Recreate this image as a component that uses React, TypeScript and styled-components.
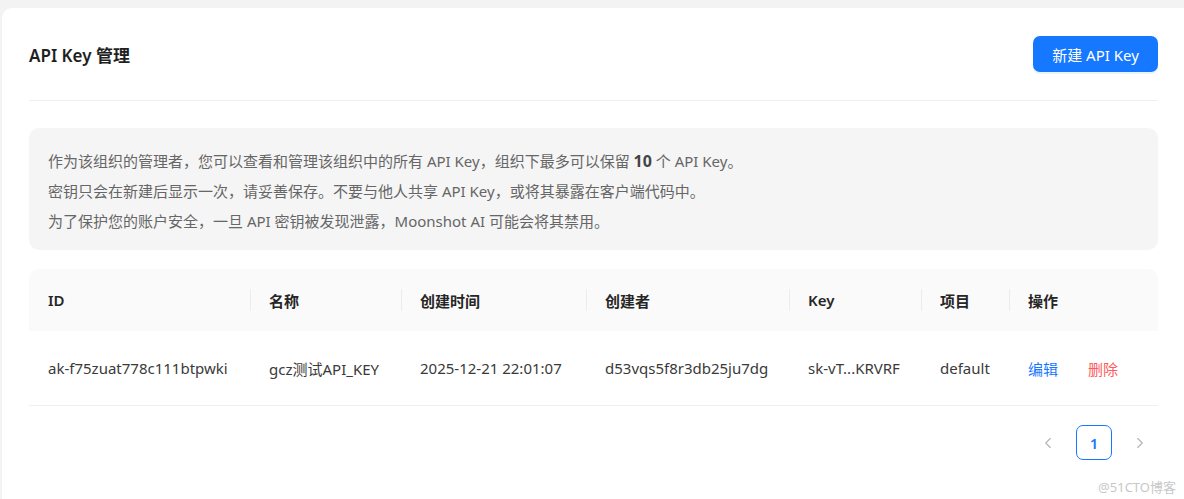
import styled, { createGlobalStyle } from "styled-components";
import { ChevronLeft, ChevronRight } from "lucide-react";

const GlobalStyle = createGlobalStyle`
  html, body {
    margin: 0;
    padding: 0;
    background: #f3f3f3;
  }
  body {
    font-family: "Noto Sans", "Noto Sans CJK SC", sans-serif;
    color: #333;
  }
`;

type Row = {
  id: string;
  name: string;
  createdAt: string;
  creator: string;
  key: string;
  project: string;
};

const rows: Row[] = [
  {
    id: "ak-f75zuat778c111btpwki",
    name: "gcz测试API_KEY",
    createdAt: "2025-12-21 22:01:07",
    creator: "d53vqs5f8r3db25ju7dg",
    key: "sk-vT...KRVRF",
    project: "default",
  },
];

const columns = ["ID", "名称", "创建时间", "创建者", "Key", "项目", "操作"];

const Page = styled.div`
  position: relative;
  height: 499px;
  padding: 8px 0 0 2px;
  box-sizing: border-box;
  overflow: hidden;
`;

const Card = styled.div`
  background: #fff;
  border-radius: 10px 0 0 0;
  padding: 0 26px 0 27px;
  height: 100%;
`;

const Header = styled.div`
  display: flex;
  align-items: center;
  justify-content: space-between;
  padding: 28px 0 28px;
  border-bottom: 1px solid #f0f0f0;
`;

const Title = styled.h1`
  margin: 0;
  font-size: 17px;
  font-weight: 600;
  color: #1f1f1f;
`;

const PrimaryButton = styled.button`
  height: 36px;
  width: 125px;
  border: none;
  border-radius: 7px;
  background: #1677ff;
  color: #fff;
  font-family: inherit;
  font-size: 15px;
  cursor: pointer;
  box-shadow: 0 2px 0 rgba(5, 145, 255, 0.1);
`;

const Notice = styled.div`
  margin-top: 27px;
  background: #f5f5f5;
  border-radius: 10px;
  padding: 18px 19px 14px;
  font-size: 15px;
  line-height: 30px;
  color: #666;

  b {
    color: #444;
    font-weight: 700;
    font-size: 16px;
  }
`;

const Table = styled.div`
  margin-top: 19px;
  display: grid;
  grid-template-columns: 221px 151px 185px 203px 132px 88px 1fr;
`;

const HeadCell = styled.div<{ $first?: boolean; $last?: boolean; $sep?: boolean }>`
  position: relative;
  height: 62px;
  display: flex;
  align-items: center;
  padding-left: 19px;
  background: #fafafa;
  font-size: 15px;
  font-weight: 600;
  color: #262626;
  border-top-left-radius: ${(p) => (p.$first ? "10px" : "0")};
  border-top-right-radius: ${(p) => (p.$last ? "10px" : "0")};

  &::before {
    content: "";
    display: ${(p) => (p.$sep ? "block" : "none")};
    position: absolute;
    left: 0;
    top: 50%;
    width: 1px;
    height: 22px;
    transform: translateY(-50%);
    background: #ececec;
  }
`;

const Cell = styled.div`
  height: 74px;
  display: flex;
  align-items: center;
  padding-left: 19px;
  font-size: 15px;
  color: #3a3a3a;
  border-bottom: 1px solid #f0f0f0;
  white-space: nowrap;
`;

const Actions = styled.div`
  display: flex;
  gap: 30px;
`;

const LinkButton = styled.span<{ $danger?: boolean }>`
  color: ${(p) => (p.$danger ? "#ff5b5e" : "#1677ff")};
  cursor: pointer;
`;

const Pagination = styled.div`
  display: flex;
  justify-content: flex-end;
  align-items: center;
  gap: 16px;
  margin-top: 19px;
  padding-right: 6px;
`;

const PageArrow = styled.span`
  width: 24px;
  height: 35px;
  display: flex;
  align-items: center;
  justify-content: center;
  color: #b4b4b4;
`;

const PageItem = styled.span`
  width: 34px;
  height: 33px;
  display: flex;
  align-items: center;
  justify-content: center;
  border: 1px solid #1677ff;
  border-radius: 7px;
  color: #1677ff;
  font-size: 15px;
  font-weight: 600;
`;

const Watermark = styled.span`
  position: absolute;
  right: 8px;
  bottom: 3px;
  font-size: 13px;
  color: #c8c8c8;
`;

export default function App() {
  return (
    <>
      <GlobalStyle />
      <Page>
        <Card>
          <Header>
            <Title>API Key 管理</Title>
            <PrimaryButton>新建 API Key</PrimaryButton>
          </Header>
          <Notice>
            <div>
              作为该组织的管理者，您可以查看和管理该组织中的所有 API Key，组织下最多可以保留 <b>10</b> 个 API Key。
            </div>
            <div>密钥只会在新建后显示一次，请妥善保存。不要与他人共享 API Key，或将其暴露在客户端代码中。</div>
            <div>为了保护您的账户安全，一旦 API 密钥被发现泄露，Moonshot AI 可能会将其禁用。</div>
          </Notice>
          <Table>
            {columns.map((title, i) => (
              <HeadCell
                key={title}
                $first={i === 0}
                $last={i === columns.length - 1}
                $sep={i > 0}
              >
                {title}
              </HeadCell>
            ))}
            {rows.map((r) => [
              <Cell key={r.id + "-id"}>{r.id}</Cell>,
              <Cell key={r.id + "-name"}>{r.name}</Cell>,
              <Cell key={r.id + "-time"}>{r.createdAt}</Cell>,
              <Cell key={r.id + "-creator"}>{r.creator}</Cell>,
              <Cell key={r.id + "-key"}>{r.key}</Cell>,
              <Cell key={r.id + "-project"}>{r.project}</Cell>,
              <Cell key={r.id + "-actions"}>
                <Actions>
                  <LinkButton>编辑</LinkButton>
                  <LinkButton $danger>删除</LinkButton>
                </Actions>
              </Cell>,
            ])}
          </Table>
          <Pagination>
            <PageArrow>
              <ChevronLeft size={18} strokeWidth={1.5} />
            </PageArrow>
            <PageItem>1</PageItem>
            <PageArrow>
              <ChevronRight size={18} strokeWidth={1.5} />
            </PageArrow>
          </Pagination>
        </Card>
        <Watermark>@51CTO博客</Watermark>
      </Page>
    </>
  );
}
